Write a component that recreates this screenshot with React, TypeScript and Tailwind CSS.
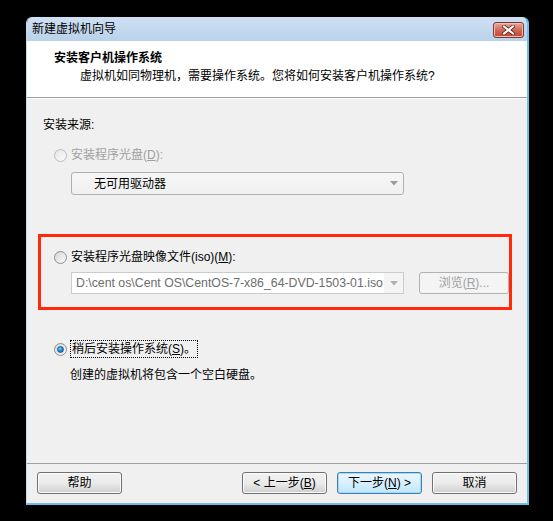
import React from 'react';

const font = { fontFamily: '"Liberation Sans", "Noto Sans CJK SC", sans-serif' };

// Win7 style radio button
const Radio = ({ checked = false, disabled = false }: { checked?: boolean; disabled?: boolean }) => (
  <div
    className={`w-[13px] h-[13px] rounded-full border flex items-center justify-center shrink-0 ${
      disabled
        ? 'border-[#bcbcbc] bg-linear-to-br from-[#e6e6e6] to-[#fbfbfb]'
        : 'border-[#8e8f8f] bg-linear-to-br from-[#d6d6d6] to-[#fbfbfb]'
    }`}
  >
    {checked && (
      <div className="w-[7px] h-[7px] rounded-full bg-[radial-gradient(circle_at_40%_35%,#8fd4ff_0%,#2a8bd6_45%,#0a4f8a_100%)] border border-[#1b5c93]" />
    )}
  </div>
);

const Arrow = ({ color = '#9a9a9a' }: { color?: string }) => (
  <svg width="8" height="5" viewBox="0 0 8 5">
    <path d="M0 0 H8 L4 4.5 Z" fill={color} />
  </svg>
);

const WinButton = ({ children, primary = false }: { children: React.ReactNode; primary?: boolean }) => (
  <div
    className={`w-[85px] h-[22px] rounded-[3px] border flex items-center justify-center text-[12px] text-black leading-none ${
      primary
        ? 'border-[#3c7fb1] bg-linear-to-b from-[#eaf6fd] via-[#d9f0fc] to-[#bee6fd] shadow-[inset_0_0_0_1px_#a7d9f5]'
        : 'border-[#707070] bg-linear-to-b from-[#f2f2f2] via-[#ebebeb] to-[#cfcfcf] shadow-[inset_0_0_0_1px_#fcfcfc]'
    }`}
  >
    {children}
  </div>
);

export default function App() {
  return (
    <div className="w-[553px] h-[521px] bg-black pl-[26px] pt-[17px]" style={font}>
      <div className="w-[503px] h-[488px] flex flex-col rounded-t-[6px] overflow-hidden border-l border-l-[#c4d9ee] border-r-2 border-r-[#6cbfe9] border-b-2 border-b-[#6cbfe9]">
        {/* 标题栏 */}
        <div className="h-[24px] flex items-center justify-between pl-[5px] pr-[3px] bg-linear-to-b from-[#cfe0f3] to-[#b9d1ea]">
          <span className="text-[12px] text-black leading-none">新建虚拟机向导</span>
          <div className="w-[31px] h-[16px] mt-[2px] rounded-[3px] border border-[#7a3b33] bg-linear-to-b from-[#e7a89b] via-[#d26a58] to-[#c0432f] flex items-center justify-center shadow-[inset_0_0_0_1px_#eebcb2]">
            <svg width="13" height="10" viewBox="0 0 13 10">
              <path d="M2 1.5 L11 8.5 M11 1.5 L2 8.5" stroke="#5a2a24" strokeWidth="3.6" strokeLinecap="square" />
              <path d="M2 1.5 L11 8.5 M11 1.5 L2 8.5" stroke="#ffffff" strokeWidth="2" strokeLinecap="square" />
            </svg>
          </div>
        </div>

        {/* 页眉 */}
        <div className="h-[57px] bg-white border-b border-[#a0a0a0] pl-[27px] pt-[9px]">
          <div className="text-[12px] font-bold text-black leading-[16px]">安装客户机操作系统</div>
          <div className="text-[12px] text-black leading-[16px] mt-[2px] ml-[26px]">
            虚拟机如同物理机，需要操作系统。您将如何安装客户机操作系统?
          </div>
        </div>

        {/* 内容 */}
        <div className="flex-1 bg-[#f0f0f0] border-t border-white pl-[16px] pt-[18px] text-[12px] leading-[16px]">
          <div className="text-black">安装来源:</div>

          <div className="flex items-center gap-[4px] ml-[11px] mt-[14px]">
            <Radio disabled />
            <span className="text-[#a0a0a0]">
              安装程序光盘(<span className="underline">D</span>):
            </span>
          </div>

          <div className="ml-[28px] mt-[9px] w-[333px] h-[23px] rounded-[3px] border border-[#adb2b5] bg-linear-to-b from-[#f6f6f6] to-[#f0f0f0] flex items-center justify-between pl-[22px] pr-[5px]">
            <span className="text-black">无可用驱动器</span>
            <Arrow />
          </div>

          {/* 红框 */}
          <div className="-ml-[5px] mt-[39px] w-[474px] h-[76px] border-[3px] border-[#ff2a0a] pl-[13px] pt-[12px]">
            <div className="flex items-center gap-[4px]">
              <Radio />
              <span className="text-black">
                安装程序光盘映像文件(iso)(<span className="underline">M</span>):
              </span>
            </div>
            <div className="flex items-center mt-[7px] ml-[17px] gap-[15px]">
              <div className="w-[333px] h-[22px] border border-[#c9cccf] bg-white flex items-center">
                <span className="flex-1 pl-[4px] text-[12.3px] text-[#6d6d6d] whitespace-nowrap overflow-hidden">
                  D:\cent os\Cent OS\CentOS-7-x86_64-DVD-1503-01.iso
                </span>
                <div className="w-[19px] h-full bg-[#f4f4f4] flex items-center justify-center">
                  <Arrow color="#b0b0b0" />
                </div>
              </div>
              <div className="w-[90px] h-[22px] rounded-[3px] border border-[#adb2b5] bg-[#f4f4f4] flex items-center justify-center text-[#a0a0a0]">
                浏览(<span className="underline">R</span>)...
              </div>
            </div>
          </div>

          <div className="flex items-center gap-[4px] ml-[11px] mt-[30px]">
            <Radio checked />
            <span className="text-black border border-dotted border-black px-[1px] -ml-[1px]">
              稍后安装操作系统(<span className="underline">S</span>)。
            </span>
          </div>
          <div className="ml-[27px] mt-[9px] text-black">创建的虚拟机将包含一个空白硬盘。</div>
        </div>

        {/* 底部按钮 */}
        <div className="h-[40px] bg-[#f0f0f0] border-t border-[#a0a0a0] flex items-start pt-[8px] pl-[10px] pr-[10px]">
          <WinButton>帮助</WinButton>
          <div className="flex-1" />
          <WinButton>
            &lt; 上一步(<span className="underline">B</span>)
          </WinButton>
          <div className="w-[10px]" />
          <WinButton primary>
            下一步(<span className="underline">N</span>) &gt;
          </WinButton>
          <div className="w-[10px]" />
          <WinButton>取消</WinButton>
        </div>
      </div>
    </div>
  );
}
